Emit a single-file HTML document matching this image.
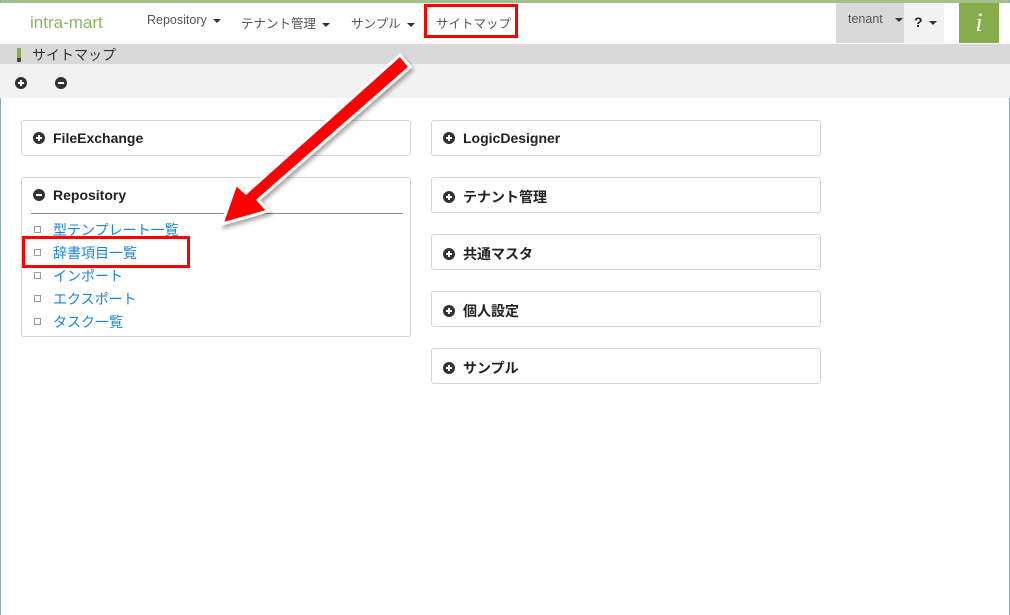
<!DOCTYPE html><html><head><meta charset="utf-8"><style>
body{margin:0;width:1010px;height:615px;overflow:hidden;background:#fff;font-family:"Liberation Sans","Noto Sans CJK JP",sans-serif;position:relative}
.a{position:absolute}
.top{left:0;top:0;width:1010px;height:3px;background:#a4c08a}
.nav{top:3px;left:0;width:1010px;height:41px;background:#fff}
.ni{font-size:12.5px;color:#555;top:13px}
.car{display:inline-block;width:0;height:0;border-left:4px solid transparent;border-right:4px solid transparent;border-top:4px solid #333;margin-left:6px;vertical-align:middle}
.panel{border:1px solid #d4d4d4;border-radius:3px;background:#fff;box-sizing:border-box}
.ph{font-size:14px;font-weight:bold;color:#222;position:absolute;left:11px;top:9px}
.ic{display:inline-block;width:12px;height:12px;border-radius:50%;background:#333;vertical-align:-1px;margin-right:8px;position:relative}
.ic::before{content:"";position:absolute;left:3px;top:5px;width:6px;height:2px;background:#fff}
.ic.p::after{content:"";position:absolute;left:5px;top:3px;width:2px;height:6px;background:#fff}
.li{position:absolute;left:12px;font-size:14px;color:#1a85d6}
.li::before{content:"";display:inline-block;width:5px;height:5px;border:1px solid #999;margin-right:12px;vertical-align:2px}
</style></head><body>
<div class="a top"></div>
<div class="a" style="left:0;top:0;width:1px;height:615px;background:#8ab"></div>
<div class="a" style="right:0;top:0;width:1px;height:615px;background:#8ab"></div>
<div class="a nav"></div>
<div class="a" style="left:30px;top:13px;font-size:17px;color:#8ab85a">intra-mart</div>
<div class="a ni" style="left:147px">Repository<span class="car"></span></div>
<div class="a ni" style="left:241px">テナント管理<span class="car"></span></div>
<div class="a ni" style="left:351px">サンプル<span class="car"></span></div>
<div class="a ni" style="left:436px">サイトマップ</div>
<div class="a" style="left:424px;top:4px;width:88px;height:28px;border:3px solid #f00"></div>
<div class="a" style="left:836px;top:3px;width:68px;height:40px;background:#d9d9d9"></div>
<div class="a ni" style="left:848px;top:12px">tenant<span class="car" style="margin-left:12px"></span></div>
<div class="a" style="left:904px;top:3px;width:40px;height:40px;background:#f2f2f2"></div>
<div class="a" style="left:914px;top:14px;font-size:14px;font-weight:bold;color:#222">?<span class="car"></span></div>
<div class="a" style="left:959px;top:3px;width:40px;height:40px;background:#85ad4a;color:#fff;font:italic 26px 'Liberation Serif',serif;text-align:center;line-height:40px">i</div>
<div class="a" style="left:0;top:44px;width:1010px;height:20px;background:#d9d9d9"></div>
<div class="a" style="left:17px;top:48px;width:4px;height:14px;background:#85ad4a"></div>
<div class="a" style="left:17px;top:58px;width:4px;height:4px;background:#444"></div>
<div class="a" style="left:32px;top:45px;font-size:14px;color:#333">サイトマップ</div>
<div class="a" style="left:0;top:64px;width:1010px;height:34px;background:#f2f2f2"></div>
<div class="a" style="left:15px;top:75px"><span class="ic p"></span></div>
<div class="a" style="left:55px;top:75px"><span class="ic"></span></div>

<div class="a panel" style="left:21px;top:120px;width:390px;height:36px"><div class="ph"><span class="ic p"></span>FileExchange</div></div>
<div class="a panel" style="left:21px;top:177px;width:390px;height:160px"><div class="ph" style="top:9px"><span class="ic"></span>Repository</div>
<div class="a" style="left:9px;top:35px;width:372px;height:1px;background:#888"></div>
<div class="li" style="top:42px">型テンプレート一覧</div>
<div class="li" style="top:65px">辞書項目一覧</div>
<div class="li" style="top:88px">インポート</div>
<div class="li" style="top:111px">エクスポート</div>
<div class="li" style="top:134px">タスク一覧</div>
</div>
<div class="a" style="left:22px;top:236px;width:162px;height:26px;border:3px solid #f00"></div>
<div class="a panel" style="left:431px;top:120px;width:390px;height:36px"><div class="ph"><span class="ic p"></span>LogicDesigner</div></div>
<div class="a panel" style="left:431px;top:177px;width:390px;height:36px"><div class="ph"><span class="ic p"></span>テナント管理</div></div>
<div class="a panel" style="left:431px;top:234px;width:390px;height:36px"><div class="ph"><span class="ic p"></span>共通マスタ</div></div>
<div class="a panel" style="left:431px;top:291px;width:390px;height:36px"><div class="ph"><span class="ic p"></span>個人設定</div></div>
<div class="a panel" style="left:431px;top:348px;width:390px;height:36px"><div class="ph"><span class="ic p"></span>サンプル</div></div>

<svg class="a" style="left:0;top:0" width="1010" height="615">
<defs><filter id="s"><feDropShadow dx="2" dy="3" stdDeviation="2" flood-color="#000" flood-opacity=".35"/></filter></defs>
<g filter="url(#s)">
<polygon points="400,55 410,67 258,200 268,211 222,224 236,184 246,193" fill="#f00" stroke="#fff" stroke-width="3" stroke-linejoin="miter"/>
</g>
</svg>
</body></html>
